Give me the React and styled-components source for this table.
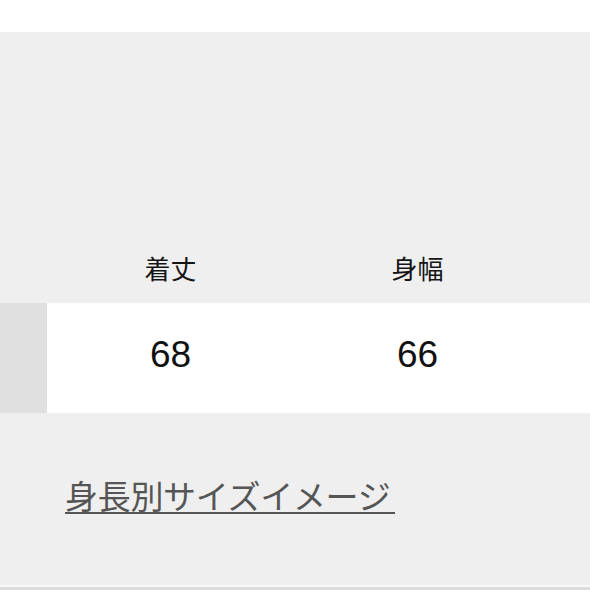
import React from "react";
import styled, { createGlobalStyle } from "styled-components";

const Global = createGlobalStyle`
  html, body { margin: 0; padding: 0; background: #efefef; }
  body { font-family: "Liberation Sans", "Noto Sans CJK JP", sans-serif; }
`;

const Page = styled.div`
  width: 590px;
  height: 590px;
  display: flex;
  flex-direction: column;
  overflow: hidden;
  background: #efefef;
`;

const TopBar = styled.div`
  height: 32px;
  flex: none;
  background: #ffffff;
`;

const Spacer = styled.div`
  height: ${(p) => p.$h}px;
  flex: none;
`;

const Row = styled.div`
  display: grid;
  grid-template-columns: 47px 247px 247px 1fr;
  height: ${(p) => p.$h}px;
  flex: none;
  background: ${(p) => (p.$white ? "#ffffff" : "transparent")};
`;

const LabelCell = styled.div`
  background: ${(p) => (p.$filled ? "#e0e0e0" : "transparent")};
`;

const HeadCell = styled.div`
  display: flex;
  align-items: center;
  justify-content: center;
  font-family: "Noto Sans CJK JP", sans-serif;
  font-size: 26px;
  color: #151515;
  padding-bottom: 2px;
`;

const ValueCell = styled.div`
  display: flex;
  align-items: center;
  justify-content: center;
  font-family: "Liberation Sans", "Noto Sans CJK JP", sans-serif;
  font-size: 37px;
  color: #111;
  padding-bottom: 7px;
`;

const LinkArea = styled.div`
  flex: 1;
  padding: 65px 0 0 65px;
`;

const Link = styled.a`
  display: inline-block;
  font-family: "Noto Sans CJK JP", sans-serif;
  font-size: 33px;
  line-height: 34px;
  color: #555555;
  text-decoration: none;
  border-bottom: 2.5px solid #555555;
  padding-right: 5px;
  letter-spacing: -0.3px;
`;

const BottomEdge = styled.div`
  height: 3px;
  flex: none;
  border-top: 2px solid #f8f8f8;
  background: #dcdcdc;
`;

export default function App() {
  return (
    <>
      <Global />
      <Page>
        <TopBar />
        <Spacer $h={201} />
        <Row $h={70}>
          <LabelCell />
          <HeadCell>着丈</HeadCell>
          <HeadCell>身幅</HeadCell>
          <div />
        </Row>
        <Row $h={110} $white>
          <LabelCell $filled />
          <ValueCell>68</ValueCell>
          <ValueCell>66</ValueCell>
          <div />
        </Row>
        <LinkArea>
          <Link href="#">身長別サイズイメージ</Link>
        </LinkArea>
        <BottomEdge />
      </Page>
    </>
  );
}
